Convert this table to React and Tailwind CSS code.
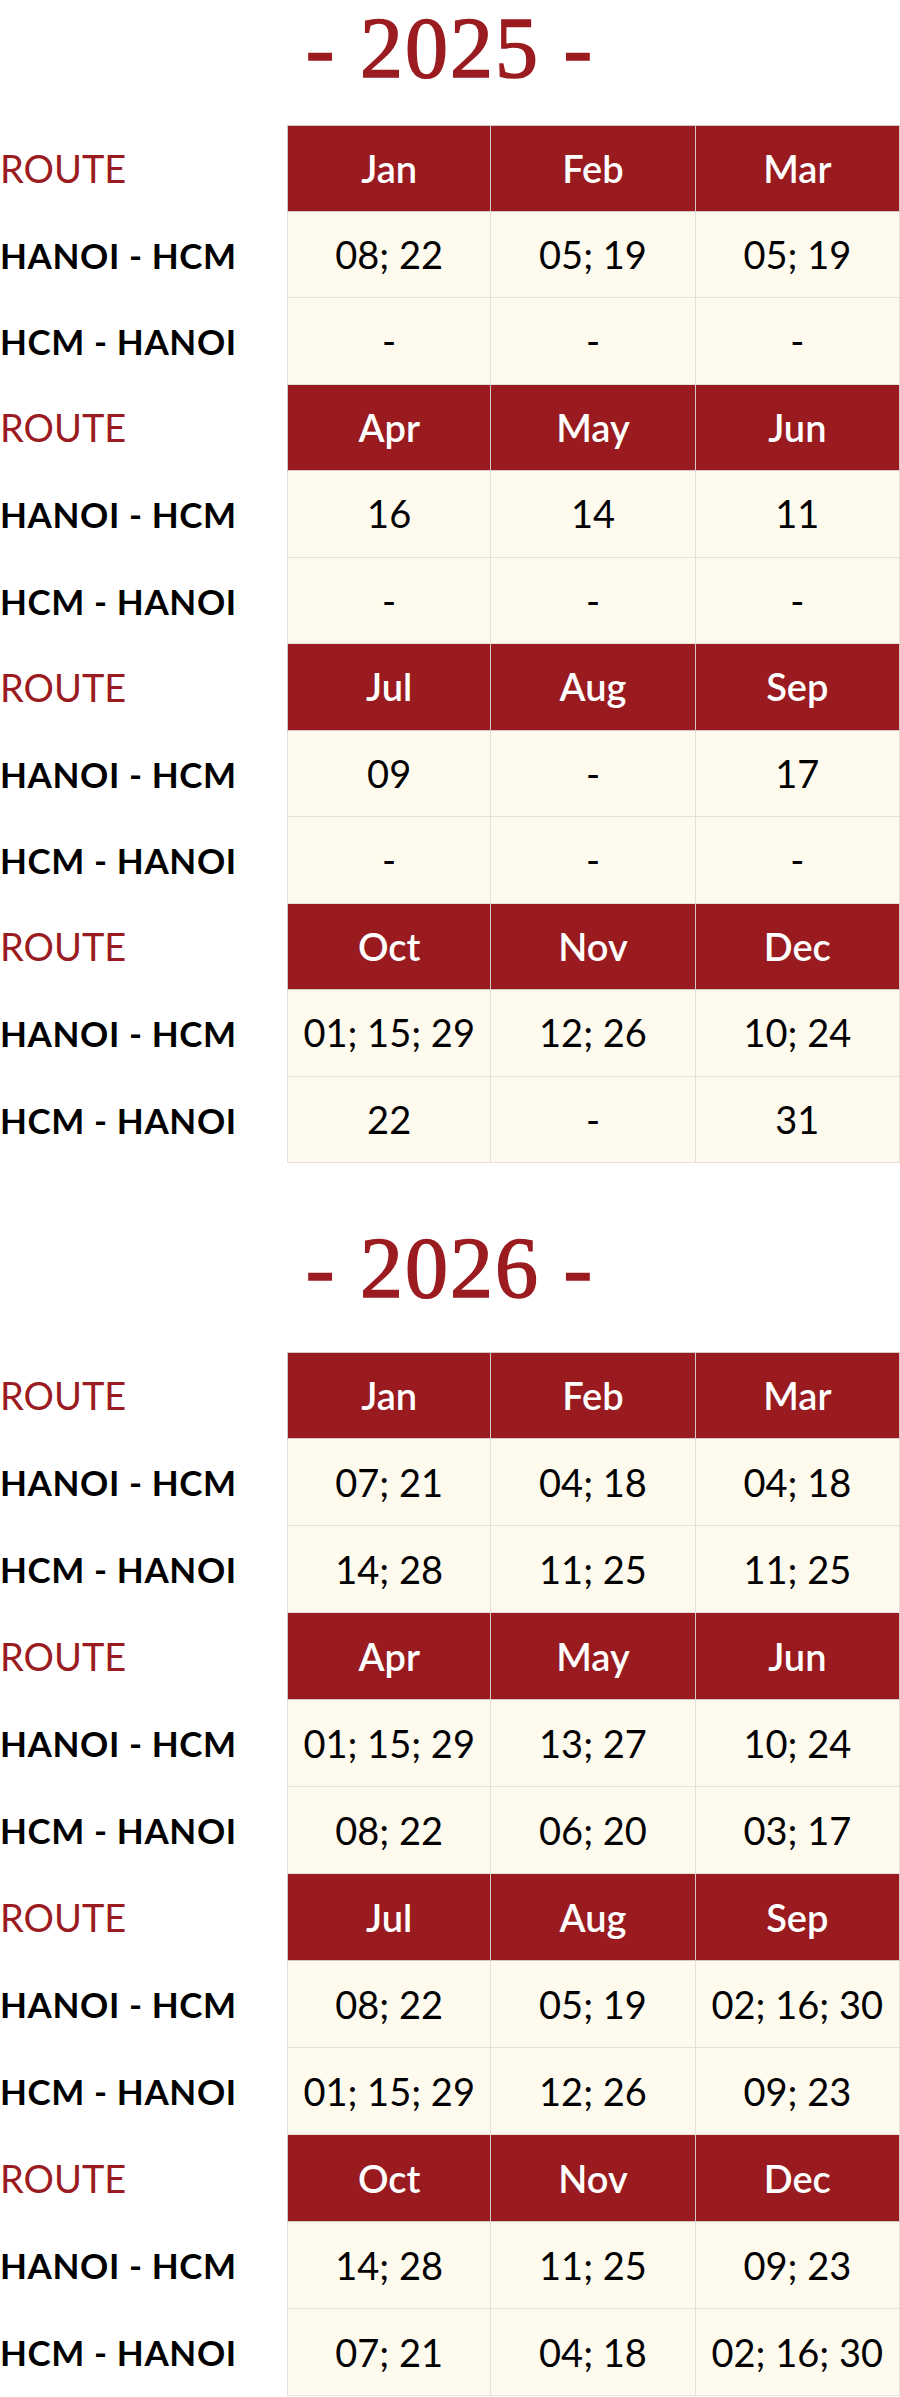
import React from 'react';

const schedules = [
  {
    year: '2025',
    rowH: 'h-[86.5px]',
    heading: 'mb-[29px]',
    quarters: [
      { months: ['Jan', 'Feb', 'Mar'], go: ['08; 22', '05; 19', '05; 19'], back: ['-', '-', '-'] },
      { months: ['Apr', 'May', 'Jun'], go: ['16', '14', '11'], back: ['-', '-', '-'] },
      { months: ['Jul', 'Aug', 'Sep'], go: ['09', '-', '17'], back: ['-', '-', '-'] },
      { months: ['Oct', 'Nov', 'Dec'], go: ['01; 15; 29', '12; 26', '10; 24'], back: ['22', '-', '31'] },
    ],
  },
  {
    year: '2026',
    rowH: 'h-[87px]',
    heading: 'mt-[57px] mb-[36px]',
    quarters: [
      { months: ['Jan', 'Feb', 'Mar'], go: ['07; 21', '04; 18', '04; 18'], back: ['14; 28', '11; 25', '11; 25'] },
      { months: ['Apr', 'May', 'Jun'], go: ['01; 15; 29', '13; 27', '10; 24'], back: ['08; 22', '06; 20', '03; 17'] },
      { months: ['Jul', 'Aug', 'Sep'], go: ['08; 22', '05; 19', '02; 16; 30'], back: ['01; 15; 29', '12; 26', '09; 23'] },
      { months: ['Oct', 'Nov', 'Dec'], go: ['14; 28', '11; 25', '09; 23'], back: ['07; 21', '04; 18', '02; 16; 30'] },
    ],
  },
];

const sans = "font-['Lato','Noto_Sans',sans-serif]";

const HeaderRow = ({ months, rowH, first }) => (
  <div className={`grid grid-cols-[287px_1fr_1fr_1fr] ${rowH}`}>
    <div className={`flex items-center text-[38px] text-[#9b1c20] ${sans}`}>ROUTE</div>
    {months.map((m, i) => (
      <div
        key={m}
        className={`flex items-center justify-center bg-[#9a1b1f] text-white text-[38px] font-semibold border-r border-b border-[#d3c6c6] ${
          i === 0 ? 'border-l' : ''
        } ${first ? 'border-t' : ''} ${sans}`}
      >
        {m}
      </div>
    ))}
  </div>
);

const DataRow = ({ label, values, rowH }) => (
  <div className={`grid grid-cols-[287px_1fr_1fr_1fr] ${rowH}`}>
    <div className={`flex items-center text-[35px] font-bold text-black tracking-[0.6px] ${sans}`}>{label}</div>
    {values.map((v, i) => (
      <div
        key={i}
        className={`flex items-center justify-center bg-[#fefaee] text-black text-[38px] border-r border-b border-[#e6e1d6] ${
          i === 0 ? 'border-l' : ''
        } ${sans}`}
      >
        {v}
      </div>
    ))}
  </div>
);

export default function App() {
  return (
    <div className="w-[900px] bg-white">
      {schedules.map((s) => (
        <section key={s.year}>
          <h2
            className={`text-center text-[86px] leading-[96px] tracking-[2px] text-[#9b1c20] [-webkit-text-stroke:1.5px_#9b1c20] font-['Liberation_Serif',serif] ${s.heading}`}
          >
            - {s.year} -
          </h2>
          <div>
            {s.quarters.map((q, qi) => (
              <React.Fragment key={qi}>
                <HeaderRow months={q.months} rowH={s.rowH} first={qi === 0} />
                <DataRow label="HANOI - HCM" values={q.go} rowH={s.rowH} />
                <DataRow label="HCM - HANOI" values={q.back} rowH={s.rowH} />
              </React.Fragment>
            ))}
          </div>
        </section>
      ))}
    </div>
  );
}
